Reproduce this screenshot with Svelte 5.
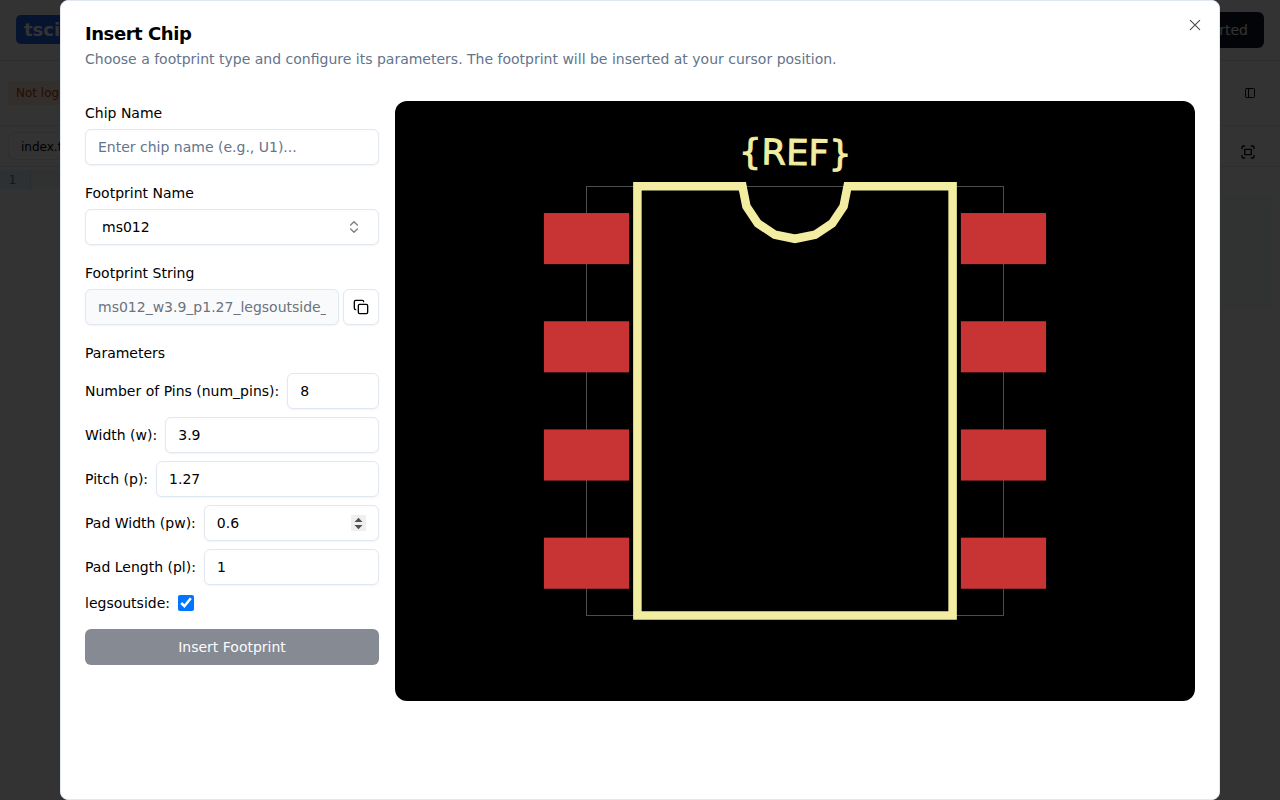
<script>
  const params = [
    { label: 'Number of Pins (num_pins):', value: 8 },
    { label: 'Width (w):', value: 3.9 },
    { label: 'Pitch (p):', value: 1.27 },
    { label: 'Pad Width (pw):', value: 0.6, spinner: true },
    { label: 'Pad Length (pl):', value: 1 }
  ];
  const scale = 85.2;
  const pads = [-1.905, -0.635, 0.635, 1.905].flatMap((y) => [-2.447, 2.447].map((x) => ({ x: 400 + x * scale, y: 299.9 + y * scale })));
  const padLength = scale;
  const padWidth = 0.6 * scale;
  const notch = Array.from({ length: 9 }, (_, i) => {
    const a = Math.PI - (i * Math.PI) / 8;
    return `${400 + 52.6 * Math.cos(a)},${85.2 + 52.6 * Math.sin(a)}`;
  }).join(' ');
</script>

<div class="page">
  <header>
    <span class="logo">tsci</span>
    <span class="started">Get Started</span>
  </header>
  <div class="toolbar">
    <span class="badge">Not logged in, can't save</span>
    <svg class="panel" width="12" height="12" viewBox="0 0 24 24"><rect x="3" y="3" width="18" height="18" rx="2" /><path d="M9 3v18" /></svg>
  </div>
  <div class="tabs">
    <span class="tab">index.tsx</span>
    <svg class="scan" width="16" height="16" viewBox="0 0 24 24"><path d="M3 7V5a2 2 0 0 1 2-2h2M17 3h2a2 2 0 0 1 2 2v2M21 17v2a2 2 0 0 1-2 2h-2M7 21H5a2 2 0 0 1-2-2v-2" /><rect x="7" y="8" width="10" height="8" rx="1" /></svg>
  </div>
  <div class="editor">
    <div class="code"><span class="gutter">1</span><span class="line"></span></div>
    <div class="preview"></div>
  </div>
</div>
<div class="overlay">
  <section class="dialog" role="dialog" aria-label="Insert Chip">
    <svg class="close" width="16" height="16" viewBox="0 0 24 24"><path d="M19 5 5 19M5 5l14 14" /></svg>
    <div class="head">
      <h2>Insert Chip</h2>
      <p>Choose a footprint type and configure its parameters. The footprint will be inserted at your cursor position.</p>
    </div>
    <div class="body">
      <div class="form">
        <div class="field">
          <span class="label">Chip Name</span>
          <input class="control" placeholder="Enter chip name (e.g., U1)..." />
        </div>
        <div class="field">
          <span class="label">Footprint Name</span>
          <button class="control select">ms012
            <svg width="16" height="16" viewBox="0 0 24 24"><path d="m7 15 5 5 5-5M7 9l5-5 5 5" /></svg>
          </button>
        </div>
        <div class="field">
          <span class="label">Footprint String</span>
          <div class="string">
            <input class="control readonly" readonly value="ms012_w3.9_p1.27_legsoutside_" />
            <button class="control copy" aria-label="Copy">
              <svg width="16" height="16" viewBox="0 0 24 24"><rect x="8" y="8" width="14" height="14" rx="2" /><path d="M4 16c-1.1 0-2-.9-2-2V4c0-1.1.9-2 2-2h10c1.1 0 2 .9 2 2" /></svg>
            </button>
          </div>
        </div>
        <div class="params">
          <span class="label">Parameters</span>
          {#each params as p}
            <label class="row">
              <span>{p.label}</span><input class="control" type="number" step="any" value={p.value} />
              {#if p.spinner}
                <svg class="spinner" width="15" height="16" viewBox="0 0 15 16"><path class="bg" d="M0 0h15v16H0z" /><path d="M3.500 7 7.500 2.700 11.500 7zM3.500 10h8l-4 4.200z" /></svg>
              {/if}
            </label>
          {/each}
          <label class="row check"><span>legsoutside:</span><input type="checkbox" checked /></label>
        </div>
        <button class="insert" disabled>Insert Footprint</button>
      </div>
      <svg class="board" width="800" height="600" viewBox="0 0 800 600">
        <rect x="191.5" y="85.5" width="417" height="429" fill="none" stroke="#fff" stroke-width="1" stroke-opacity=".3" />
        {#each pads as pad}
          <rect x={pad.x - padLength / 2} y={pad.y - padWidth / 2} width={padLength} height={padWidth} fill="#c83434" />
        {/each}
        <g fill="none" stroke="#f2eda1" stroke-width="8.52">
          <polyline points="{notch} 557.6,85.2 557.6,514.6 242.4,514.6 242.4,85.2 347.4,85.2 348.2,90" />
        </g>
        <text x="400" y="63.8" text-anchor="middle" transform="rotate(1 400 63.8)">&#123;REF&#125;</text>
      </svg>
    </div>
  </section>
</div>

<style>
  :global(body) { margin: 0; overflow: hidden; font-family: "DejaVu Sans", sans-serif; font-size: 14px; line-height: 20px; color: #020817; }
  :global(*) { box-sizing: border-box; }
  svg { fill: none; stroke: currentColor; stroke-width: 2; stroke-linecap: round; stroke-linejoin: round; flex: none; }
  .page { height: 800px; background: #fff; display: flex; flex-direction: column; color: #000; }
  header { height: 61px; border-bottom: 1px solid #e5e7eb; padding: 0 16px; display: flex; align-items: center; justify-content: space-between; }
  .logo { width: 112px; margin-bottom: 1px; background: #2563eb; color: #fff; font-weight: 700; font-size: 18px; line-height: 29px; padding: 0 8px; border-radius: 5px; }
  .started { background: #0f172a; color: #fff; padding: 8px 16px; border-radius: 6px; }
  .toolbar { height: 65px; border-bottom: 1px solid #e5e7eb; display: flex; align-items: center; justify-content: space-between; padding: 0 24px 0 8px; }
  .badge { background: #ffe9dc; color: #c2410c; padding: 2px 8px; font-size: 12px; }
  .tabs { height: 41px; border-bottom: 1px solid #e5e7eb; display: flex; align-items: center; justify-content: space-between; padding: 0 24px 0 8px; }
  .tab { border: 1px solid #e2e8f0; border-radius: 6px; padding: 4px 12px 2px; font-size: 12px; }
  .scan { margin-top: 12px; }
  .editor { flex: 1; display: flex; justify-content: space-between; padding-top: 3px; }
  .code { display: flex; width: 640px; height: 19px; font: 12px/20px "DejaVu Sans Mono", monospace; }
  .gutter { width: 31px; padding-right: 14px; text-align: right; background: #e2f2ff; color: #6c6c6c; border-right: 1px solid #ddd; }
  .line { flex: 1; background: #f0f7fb; }
  .preview { width: 420px; height: 116px; margin: 24px 8px 0 0; background: #f0fdf6; }
  .overlay { position: fixed; inset: 0; background: rgba(0, 0, 0, .8); display: flex; justify-content: center; }
  .dialog { position: relative; width: 1160px; height: 800px; background: #fff; border: 1px solid #e2e8f0; border-radius: 8px; padding: 24px; color: #000; }
  .close { position: absolute; top: 16px; right: 16px; opacity: .7; stroke-width: 1.7; }
  h2 { margin: 0; font-size: 18px; line-height: 18px; letter-spacing: -.45px; }
  p { margin: 6px 0 0; color: #64748b; }
  .body { display: flex; gap: 16px; margin-top: 32px; }
  .form { width: 294px; flex: none; display: flex; flex-direction: column; }
  .field { display: flex; flex-direction: column; margin-bottom: 16px; }
  .label { height: 28px; line-height: 24px; }
  .control { height: 36px; width: 100%; min-width: 0; border: 1px solid #e2e8f0; border-radius: 6px; background: #fff; box-shadow: 0 1px 2px rgba(0, 0, 0, .05); padding: 4px 12px; font: 14px/20px "DejaVu Sans", sans-serif; color: #000; outline: none; }
  .control::placeholder { color: #64748b; opacity: 1; }
  .select { padding: 0 16px; display: flex; align-items: center; justify-content: space-between; }
  .select svg { opacity: .5; }
  .string { display: flex; gap: 4px; }
  .readonly { background: #f9fafb; color: #6b7280; }
  .copy { width: 36px; flex: none; padding: 0; display: grid; place-items: center; }
  .params { display: flex; flex-direction: column; gap: 8px; }
  .params .label { height: 24px; }
  .row { position: relative; display: flex; align-items: center; gap: 8px; }
  .row span { white-space: nowrap; }
  .row .control { flex: 1; width: 0; }
  input[type="number"]::-webkit-inner-spin-button { opacity: 0; }
  .spinner { position: absolute; right: 13px; top: 10px; fill: #505050; stroke: none; }
  .spinner .bg { fill: #efefef; }
  .check { height: 20px; }
  .check input { width: 16px; height: 16px; margin: 0; }
  .insert { margin-top: 16px; height: 36px; border: 0; border-radius: 6px; background: #0f172a; color: #f8fafc; opacity: .5; font: 14px/20px "DejaVu Sans", sans-serif; }
  .board { background: #000; border-radius: 12px; stroke: none; stroke-linecap: butt; stroke-linejoin: miter; }
  .board text { fill: #f2eda1; stroke: #f2eda1; stroke-width: .9; font: 35.4px "DejaVu Sans", sans-serif; }
</style>
